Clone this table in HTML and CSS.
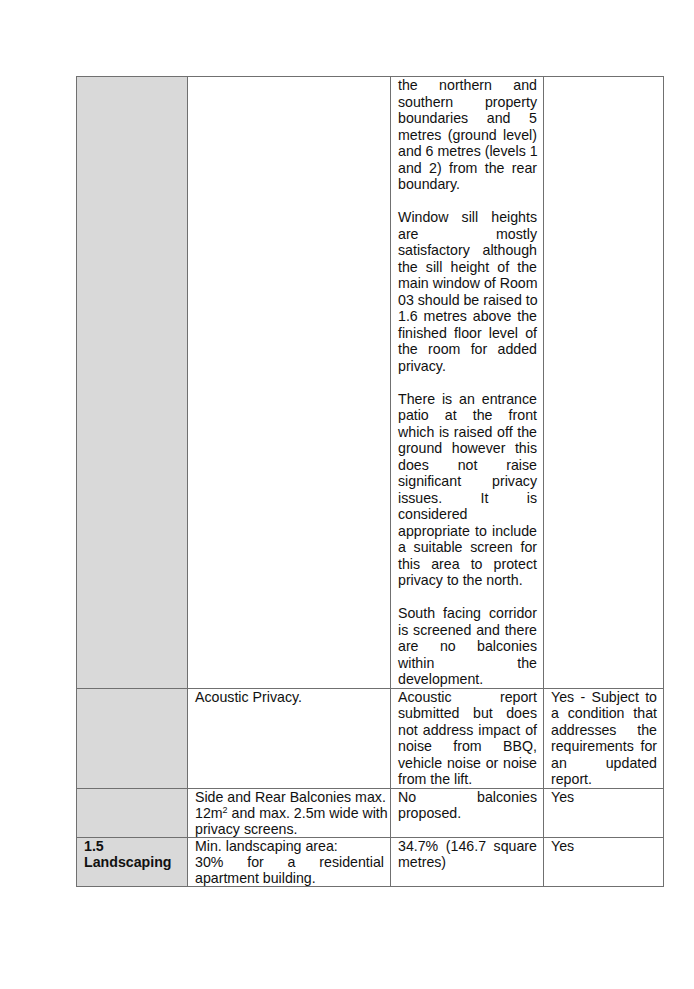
FILE: index.html
```html
<!DOCTYPE html>
<html>
<head>
<meta charset="utf-8">
<link rel="stylesheet" href="styles.css">
</head>
<body>
<table class="grid">
  <colgroup>
    <col class="c1"><col class="c2"><col class="c3"><col class="c4">
  </colgroup>
  <tr>
    <td class="head"></td>
    <td></td>
    <td>
      <p>
        <span class="l">the northern and</span>
        <span class="l">southern property</span>
        <span class="l">boundaries and 5</span>
        <span class="l">metres (ground level)</span>
        <span class="l">and 6 metres (levels 1</span>
        <span class="l">and 2) from the rear</span>
        <span class="l e">boundary.</span>
      </p>
      <p>
        <span class="l">Window sill heights</span>
        <span class="l">are mostly</span>
        <span class="l">satisfactory although</span>
        <span class="l">the sill height of the</span>
        <span class="l">main window of Room</span>
        <span class="l">03 should be raised to</span>
        <span class="l">1.6 metres above the</span>
        <span class="l">finished floor level of</span>
        <span class="l">the room for added</span>
        <span class="l e">privacy.</span>
      </p>
      <p>
        <span class="l">There is an entrance</span>
        <span class="l">patio at the front</span>
        <span class="l">which is raised off the</span>
        <span class="l">ground however this</span>
        <span class="l">does not raise</span>
        <span class="l">significant privacy</span>
        <span class="l">issues. It is</span>
        <span class="l e">considered</span>
        <span class="l">appropriate to include</span>
        <span class="l">a suitable screen for</span>
        <span class="l">this area to protect</span>
        <span class="l e">privacy to the north.</span>
      </p>
      <p>
        <span class="l">South facing corridor</span>
        <span class="l">is screened and there</span>
        <span class="l">are no balconies</span>
        <span class="l">within the</span>
        <span class="l e">development.</span>
      </p>
    </td>
    <td></td>
  </tr>
  <tr>
    <td class="head cont"></td>
    <td><p><span class="l e">Acoustic Privacy.</span></p></td>
    <td>
      <p>
        <span class="l">Acoustic report</span>
        <span class="l">submitted but does</span>
        <span class="l">not address impact of</span>
        <span class="l">noise from BBQ,</span>
        <span class="l">vehicle noise or noise</span>
        <span class="l e">from the lift.</span>
      </p>
    </td>
    <td>
      <p>
        <span class="l">Yes - Subject to</span>
        <span class="l">a condition that</span>
        <span class="l">addresses the</span>
        <span class="l">requirements for</span>
        <span class="l">an updated</span>
        <span class="l e">report.</span>
      </p>
    </td>
  </tr>
  <tr class="short">
    <td class="head cont"></td>
    <td>
      <p>
        <span class="l">Side and Rear Balconies max.</span>
        <span class="l">12m<sup>2</sup> and max. 2.5m wide with</span>
        <span class="l e">privacy screens.</span>
      </p>
    </td>
    <td>
      <p>
        <span class="l">No balconies</span>
        <span class="l e">proposed.</span>
      </p>
    </td>
    <td><p><span class="l e">Yes</span></p></td>
  </tr>
  <tr class="short">
    <td class="head">
      <p class="label">
        <span class="l e">1.5</span>
        <span class="l e">Landscaping</span>
      </p>
    </td>
    <td>
      <p>
        <span class="l e">Min. landscaping area:</span>
        <span class="l">30% for a residential</span>
        <span class="l e">apartment building.</span>
      </p>
    </td>
    <td>
      <p>
        <span class="l">34.7% (146.7 square</span>
        <span class="l e">metres)</span>
      </p>
    </td>
    <td><p><span class="l e">Yes</span></p></td>
  </tr>
</table>
</body>
</html>
```

FILE: styles.css
```css
html, body {
  margin: 0;
  padding: 0;
  background: #ffffff;
}

body {
  padding: 76px 0 0 76px;
  font-family: "Liberation Sans", Arial, sans-serif;
  font-size: 14.2px;
  line-height: 16.5px;
  color: #111111;
}

.grid {
  border-collapse: collapse;
  table-layout: fixed;
  width: 587px;
}

.c1 { width: 111px; }
.c2 { width: 203px; }
.c3 { width: 153px; }
.c4 { width: 120px; }

.grid td {
  border: 1px solid #707070;
  padding: 0 6px 0 7px;
  vertical-align: top;
}

.grid td.head {
  background: #d9d9d9;
}

.grid td.head.cont {
  border-top-color: #e6e6e6;
}

.grid p {
  margin: 0 0 16.5px 0;
}

.grid p:last-child {
  margin-bottom: 0;
}

.grid tr.short td {
  line-height: 16.1px;
}

.l {
  display: block;
  white-space: nowrap;
  text-align: justify;
  text-align-last: justify;
}

.l.e {
  text-align: left;
  text-align-last: left;
}

.grid p.label {
  font-weight: bold;
}

sup {
  font-size: 9px;
  line-height: 0;
  vertical-align: 5px;
}
```
